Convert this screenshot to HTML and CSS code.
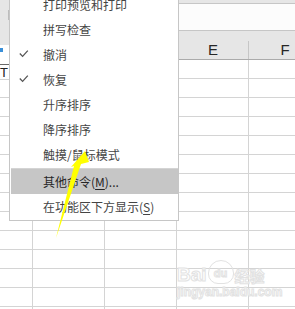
FILE: index.html
```html
<!DOCTYPE html>
<html lang="zh-CN">
<head>
  <meta charset="UTF-8" />
  <title>快速访问工具栏</title>
  <link rel="stylesheet" href="styles.css">
</head>
<body>
  <div class="screen">
    <div class="sheet">
      <div class="ribbon"></div>
      <div class="fx"></div>
      <div class="colhead">
        <div class="hcell">B</div>
        <div class="hcell">C</div>
        <div class="hcell">D</div>
        <div class="hcell">E</div>
        <div class="hcell">F</div>
      </div>
      <div class="cells"></div>
    </div>

    <div class="corner">
      <div class="corner-top"></div>
      <div class="corner-mark"></div>
      <div class="corner-cell">T</div>
    </div>

    <ul class="menu">
      <li class="item">打印预览和打印</li>
      <li class="item">拼写检查</li>
      <li class="item checked">
        <svg class="check" width="10" height="10" viewBox="0 0 10 10"><polyline points="0.8,4.5 3.6,7.4 8.8,1.6" /></svg>
        撤消
      </li>
      <li class="item checked">
        <svg class="check" width="10" height="10" viewBox="0 0 10 10"><polyline points="0.8,4.5 3.6,7.4 8.8,1.6" /></svg>
        恢复
      </li>
      <li class="item">升序排序</li>
      <li class="item">降序排序</li>
      <li class="item">触摸/鼠标模式</li>
      <li class="sep"></li>
      <li class="item hover">其他命令(<u>M</u>)...</li>
      <li class="item">在功能区下方显示(<u>S</u>)</li>
    </ul>

    <svg class="arrow" width="295" height="309" viewBox="0 0 295 309">
      <polygon points="85,151 89,162 81,164 56,238 74,166 71,167" />
    </svg>

    <div class="watermark">
      <div class="wm-logo"><span>Bai</span><span class="paw">du</span><span class="wm-cn">经验</span></div>
      <div class="wm-url">jingyan.baidu.com</div>
    </div>
  </div>
</body>
</html>
```

FILE: styles.css
```css
body {
  margin: 0;
  background: #fff;
  font-family: "Noto Sans CJK SC", "Noto Sans", sans-serif;
}

.screen {
  position: relative;
  width: 295px;
  height: 309px;
  overflow: hidden;
  background: #fff;
}

.sheet {
  display: flex;
  flex-direction: column;
  height: 100%;
}

.ribbon {
  height: 3px;
  background: #e6e6e6;
  border-bottom: 1px solid #c6c6c6;
}

.fx {
  height: 26px;
  background: #fcfcfc;
  border-bottom: 1px solid #c6c6c6;
}

.colhead {
  display: flex;
  height: 28px;
  margin-left: -39px;
  background: #e6e6e6;
  border-bottom: 1px solid #ababab;
}
.hcell {
  position: relative;
  flex: 0 0 72px;
  text-align: center;
  padding-top: 10px;
  font-family: "Liberation Sans", Arial, sans-serif;
  font-size: 15px;
  line-height: 17px;
  color: #262626;
}
.hcell::after {
  content: "";
  position: absolute;
  right: 0;
  bottom: 0;
  width: 1px;
  height: 18px;
  background: #c6c6c6;
}

.cells {
  flex: 1;
  background-image:
    linear-gradient(to bottom, transparent 18px, #d4d4d4 18px),
    linear-gradient(to right, transparent 71px, #d4d4d4 71px);
  background-size: 100% 19px, 72px 100%;
  background-position: 0 0, -39px 0;
}

/* bit of the window left of the menu */
.corner {
  position: absolute;
  left: 0;
  top: 0;
  width: 9px;
  height: 97px;
  background: #fff;
}
.corner-top {
  height: 45px;
  background: #e6e6e6;
  background-image: linear-gradient(to bottom, transparent 10px, #bdbdbd 10px, #bdbdbd 20px, transparent 20px);
  background-size: 1px 100%;
  background-position: 8px 0;
  background-repeat: no-repeat;
}
.corner-mark {
  width: 3px;
  height: 4px;
  margin-top: 3px;
  background: #3a8fd8;
}
.corner-cell {
  margin-top: 12px;
  height: 13px;
  border-top: 1px solid #6a6a6a;
  border-bottom: 1px solid #d4d4d4;
  padding-top: 1px;
  font-family: "Liberation Sans", Arial, sans-serif;
  font-size: 13px;
  line-height: 13px;
  color: #222;
}

.menu {
  position: absolute;
  left: 9px;
  top: -9px;
  width: 170px;
  box-sizing: border-box;
  margin: 0;
  padding: 0 0 1px 1px;
  list-style: none;
  background: #fff;
  border: 1px solid #c6c6c6;
}
.item {
  position: relative;
  height: 25px;
  padding-left: 32px;
  font-size: 12px;
  line-height: 25px;
  color: #444;
  white-space: nowrap;
}
.item u {
  text-underline-offset: 2px;
}
.item.hover {
  background: #c6c6c6;
  color: #262626;
}
.check {
  position: absolute;
  left: 8px;
  top: 7px;
}
.check polyline {
  fill: none;
  stroke: #555;
  stroke-width: 1.3;
}
.sep {
  height: 1px;
  margin-top: 1px;
  background: #d4d4d4;
}

.arrow {
  position: absolute;
  left: 0;
  top: 0;
  pointer-events: none;
}
.arrow polygon {
  fill: #ffff00;
}

.watermark {
  position: absolute;
  left: 177px;
  top: 253px;
  color: #fff;
  -webkit-text-stroke: 1px #e2e2e2;
  font-family: "Liberation Sans", Arial, sans-serif;
  font-weight: bold;
}
.wm-logo {
  display: flex;
  align-items: flex-end;
  height: 31px;
  font-size: 19px;
  line-height: 19px;
}
.paw {
  width: 26px;
  height: 24px;
  margin: 0 1px;
  border: 1px solid #e2e2e2;
  border-radius: 13px 13px 10px 10px;
  box-sizing: border-box;
  font-size: 11px;
  line-height: 24px;
  text-align: center;
}
.wm-cn {
  font-family: "Noto Sans CJK SC", sans-serif;
  font-size: 15px;
  line-height: 17px;
}
.wm-url {
  margin-top: 2px;
  font-size: 12px;
  line-height: 12px;
}
```
